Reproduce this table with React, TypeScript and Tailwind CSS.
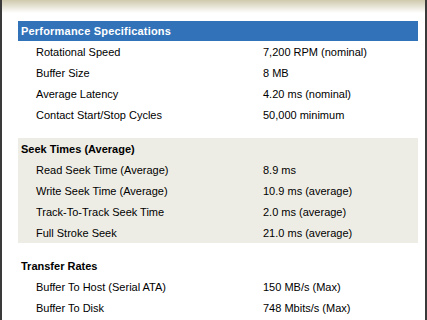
import React from "react";

const perf = [
  ["Rotational Speed", "7,200 RPM (nominal)"],
  ["Buffer Size", "8 MB"],
  ["Average Latency", "4.20 ms (nominal)"],
  ["Contact Start/Stop Cycles", "50,000 minimum"],
];
const seek = [
  ["Read Seek Time (Average)", "8.9 ms"],
  ["Write Seek Time (Average)", "10.9 ms (average)"],
  ["Track-To-Track Seek Time", "2.0 ms (average)"],
  ["Full Stroke Seek", "21.0 ms (average)"],
];
const transfer = [
  ["Buffer To Host (Serial ATA)", "150 MB/s (Max)"],
  ["Buffer To Disk", "748 Mbits/s (Max)"],
];

function Row({ label, value }: { label: string; value: string }) {
  return (
    <div className="flex h-[21px] items-center pt-[2px]">
      <div className="w-[245px] pl-[18px]">{label}</div>
      <div>{value}</div>
    </div>
  );
}

export default function App() {
  return (
    <div
      className="relative h-[320px] w-[427px] overflow-hidden bg-white text-[11px] text-black"
      style={{ fontFamily: '"Liberation Sans", Arial, sans-serif' }}
    >
      <div className="h-[13px] bg-gradient-to-b from-[#cfc9ad] to-white" />
      <div className="absolute left-0 top-0 h-full w-[2px] bg-[#3a3a3a]" />
      <div className="absolute right-0 top-0 h-full w-[2px] bg-[#3a3a3a]" />
      <div className="pl-[18px] pr-[9px] pt-[8px]">
        <div className="flex h-[20px] items-center bg-[#3172b9] pl-[3px] pt-[1px] font-bold tracking-[0.2px] text-white">
          Performance Specifications
        </div>
        {perf.map(([l, v]) => (
          <Row key={l} label={l} value={v} />
        ))}
        <div className="mt-[13px] bg-[#eeede5]">
          <div className="flex h-[21px] items-center pl-[3px] pt-[2px] font-bold">Seek Times (Average)</div>
          {seek.map(([l, v]) => (
            <Row key={l} label={l} value={v} />
          ))}
        </div>
        <div className="mt-[12px]">
          <div className="flex h-[21px] items-center pl-[3px] pt-[1px] font-bold">Transfer Rates</div>
          {transfer.map(([l, v]) => (
            <Row key={l} label={l} value={v} />
          ))}
        </div>
      </div>
    </div>
  );
}
